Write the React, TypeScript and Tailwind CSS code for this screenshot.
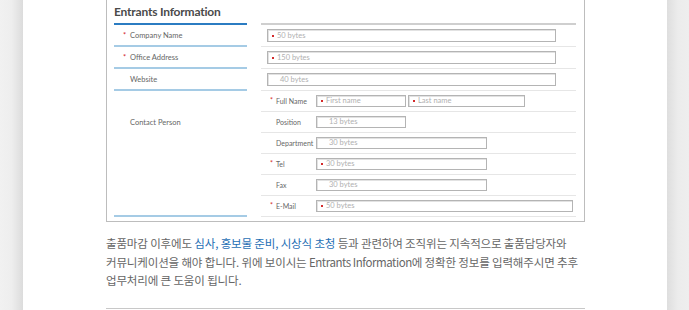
import React from 'react';

const leftRows = [
  { label: 'Company Name', req: true },
  { label: 'Office Address', req: true },
  { label: 'Website', req: false },
];

const contactRows = [
  { label: 'Full Name', req: true, inputs: [{ w: 'w-[90px]', ph: 'First name', req: true }, { w: 'w-[117px]', ph: 'Last name', req: true }] },
  { label: 'Position', req: false, inputs: [{ w: 'w-[90px]', ph: '13 bytes', req: false }] },
  { label: 'Department', req: false, inputs: [{ w: 'w-[171px]', ph: '30 bytes', req: false }] },
  { label: 'Tel', req: true, inputs: [{ w: 'w-[171px]', ph: '30 bytes', req: true }] },
  { label: 'Fax', req: false, inputs: [{ w: 'w-[171px]', ph: '30 bytes', req: false }] },
  { label: 'E-Mail', req: true, inputs: [{ w: 'w-[257px]', ph: '50 bytes', req: true }] },
];

function FakeInput({ w, ph, req, tall }: { w: string; ph: string; req: boolean; tall?: boolean }) {
  return (
    <div
      className={`${w} ${tall ? 'h-[13px]' : 'h-[12px]'} border border-[#b4b4b4] shadow-[inset_1px_1px_0_#e2e2e2] bg-white flex items-center pl-[4px] gap-[3px] text-[7.5px] text-[#b0b0b0] leading-none`}
    >
      {req ? <span className="w-[2px] h-[2px] bg-[#d42a2a] shrink-0" /> : <span className="w-[2px] shrink-0" />}
      <span className={req ? '' : 'pl-[3px]'}>{ph}</span>
    </div>
  );
}

export default function App() {
  return (
    <div className="w-[689px] h-[310px] flex bg-[#efefef] overflow-hidden" style={{ fontFamily: '"Noto Sans", "Noto Sans CJK KR", sans-serif' }}>
      <div className="w-[23px] h-full bg-gradient-to-r from-[#f1f1f1] via-[#eeeeee] to-[#dcdcdc]" />
      <div className="w-[644px] h-full bg-white pl-[83px]">
        <div className="w-[479px]">
          {/* form screenshot frame */}
          <div className="border-x border-b border-[#bdbdbd] pl-[7px] pr-[8px] pb-[4px]">
            <div className="h-[23px] flex items-center pt-[1px] text-[12px] font-bold tracking-[-0.2px] text-[#4a4a4a]" style={{ fontFamily: 'Lato, sans-serif' }}>
              Entrants Information
            </div>
            <div className="flex gap-[14px]" style={{ fontFamily: 'Lato, sans-serif' }}>
              {/* left labels */}
              <div className="w-[133px] flex flex-col border-t-2 border-[#2b7cc2]">
                {leftRows.map((r) => (
                  <div key={r.label} className="h-[22px] border-b-2 border-[#a5cbe5] flex items-center pt-[2px] pl-[9px] text-[7.5px] text-[#666]">
                    <span className="w-[7px] text-[#d42a2a]">{r.req ? '*' : ''}</span>
                    {r.label}
                  </div>
                ))}
                <div className="h-[126px] border-b-2 border-[#a5cbe5] pl-[16px] pt-[26px] text-[7.5px] text-[#666]">
                  Contact Person
                </div>
              </div>
              {/* right fields */}
              <div className="w-[315px] flex flex-col border-t-2 border-[#cfcfcf]">
                {[
                  { ph: '50 bytes', req: true },
                  { ph: '150 bytes', req: true },
                  { ph: '40 bytes', req: false },
                ].map((f) => (
                  <div key={f.ph} className="h-[22px] border-b border-[#e6e6e6] flex items-center pl-[6px]">
                    <FakeInput w="w-[289px]" ph={f.ph} req={f.req} tall />
                  </div>
                ))}
                {contactRows.map((r) => (
                  <div key={r.label} className="h-[21px] border-b border-[#e6e6e6] flex items-center pl-[9px]">
                    <div className="w-[46px] flex items-center text-[7px] text-[#666] pt-[1px]">
                      <span className="w-[6px] text-[#d42a2a] self-start -mt-[1px]">{r.req ? '*' : ''}</span>
                      {r.label}
                    </div>
                    <div className="flex gap-[2px]">
                      {r.inputs.map((i) => (
                        <FakeInput key={i.ph} w={i.w} ph={i.ph} req={i.req} />
                      ))}
                    </div>
                  </div>
                ))}
              </div>
            </div>
          </div>

          {/* description */}
          <p className="mt-[12px] whitespace-nowrap text-[11.5px] leading-[18.5px] text-[#666] tracking-[-0.15px]" style={{ fontFamily: '"Noto Sans CJK KR", sans-serif' }}>
            출품마감 이후에도 <span className="text-[#1f6fb5]">심사, 홍보물 준비, 시상식 초청</span> 등과 관련하여 조직위는 지속적으로 출품담당자와
            <br />
            커뮤니케이션을 해야 합니다. 위에 보이시는 <span className="tracking-[-0.45px]">Entrants Information</span>에 정확한 정보를 입력해주시면 추후
            <br />
            업무처리에 큰 도움이 됩니다.
          </p>
          <div className="mt-[18px] h-px bg-[#c8c8c8]" />
        </div>
      </div>
      <div className="w-[22px] h-full bg-gradient-to-r from-[#dedede] via-[#ececec] to-[#eeeeee]" />
    </div>
  );
}
